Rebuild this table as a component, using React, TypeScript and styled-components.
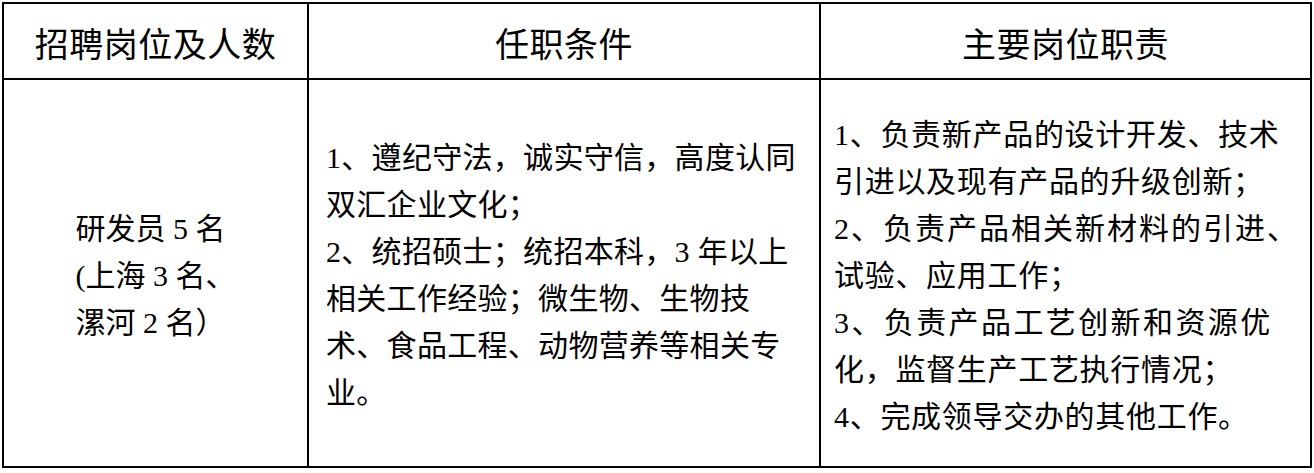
import React from 'react';
import styled, { createGlobalStyle } from 'styled-components';

const GlobalStyle = createGlobalStyle`
  html, body {
    margin: 0;
    padding: 0;
    background: #fff;
  }
  body {
    font-family: 'Liberation Serif', 'Noto Sans CJK SC', serif;
    color: #000;
  }
`;

const Page = styled.div`
  padding: 2px 0 0 2px;
`;

const Table = styled.div`
  display: grid;
  grid-template-columns: 305px 512px 491px;
  grid-template-rows: 76px 388px;
  width: max-content;
  border-top: 2px solid #000;
  border-left: 2px solid #000;
`;

const HeadCell = styled.div`
  display: flex;
  align-items: center;
  justify-content: center;
  box-sizing: border-box;
  padding-top: 2px;
  border-right: 2px solid #000;
  border-bottom: 2px solid #000;
  font-size: 34px;
  letter-spacing: 0.5px;
`;

const BodyCell = styled.div<{ $center?: boolean; $pad: number; $spacing?: number }>`
  display: flex;
  flex-direction: column;
  justify-content: center;
  align-items: ${(p) => (p.$center ? 'center' : 'flex-start')};
  box-sizing: border-box;
  padding: 4px 0 0 ${(p) => p.$pad}px;
  border-right: 2px solid #000;
  border-bottom: 2px solid #000;
  font-size: 30px;
  line-height: 47px;
  letter-spacing: ${(p) => p.$spacing ?? 0}px;
`;

const Lines = styled.div`
  display: flex;
  flex-direction: column;
`;

const Line = styled.div<{ $spread?: number }>`
  white-space: pre;
  ${(p) => (p.$spread !== undefined ? `letter-spacing: ${p.$spread}px;` : '')}
`;

const headers = ['招聘岗位及人数', '任职条件', '主要岗位职责'];

const positionLines = ['研发员 5 名', '(上海 3 名、', '漯河 2 名）'];

const requirementLines = [
  '1、遵纪守法，诚实守信，高度认同',
  '双汇企业文化；',
  '2、统招硕士；统招本科，3 年以上',
  '相关工作经验；微生物、生物技',
  '术、食品工程、动物营养等相关专',
  '业。',
];

const dutyLines: { text: string; spread?: number }[] = [
  { text: '1、负责新产品的设计开发、技术' },
  { text: '引进以及现有产品的升级创新；' },
  { text: '2、负责产品相关新材料的引进、', spread: 2 },
  { text: '试验、应用工作；' },
  { text: '3、负责产品工艺创新和资源优', spread: 2.4 },
  { text: '化，监督生产工艺执行情况；' },
  { text: '4、完成领导交办的其他工作。' },
];

const App = () => {
  return (
    <Page>
      <GlobalStyle />
      <Table>
        {headers.map((h) => (
          <HeadCell key={h}>{h}</HeadCell>
        ))}
        <BodyCell $center $pad={0}>
          <Lines>
            {positionLines.map((l) => (
              <Line key={l}>{l}</Line>
            ))}
          </Lines>
        </BodyCell>
        <BodyCell $pad={17} $spacing={0.3}>
          <Lines>
            {requirementLines.map((l) => (
              <Line key={l}>{l}</Line>
            ))}
          </Lines>
        </BodyCell>
        <BodyCell $pad={13} $spacing={0.7}>
          <Lines>
            {dutyLines.map((l) => (
              <Line key={l.text} $spread={l.spread}>
                {l.text}
              </Line>
            ))}
          </Lines>
        </BodyCell>
      </Table>
    </Page>
  );
};

export default App;
